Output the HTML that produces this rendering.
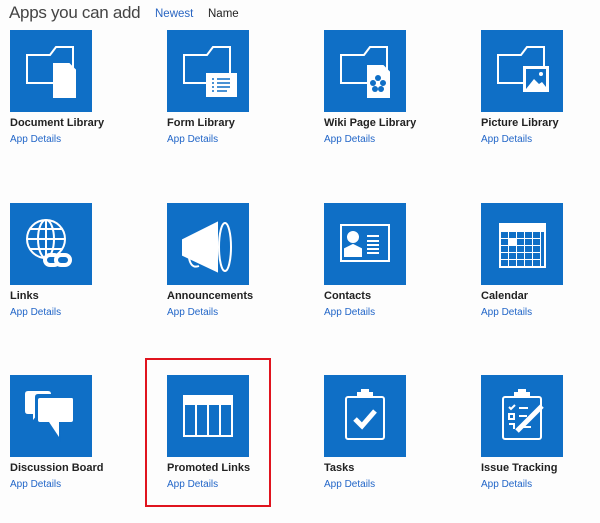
<!DOCTYPE html>
<html><head><meta charset="utf-8"><style>
body{margin:0;width:600px;height:523px;background:#fdfdfd;font-family:"Liberation Sans",sans-serif;position:relative;overflow:hidden}
.h{position:absolute;left:9px;top:3px;font-size:17px;color:#444;letter-spacing:-0.3px}
.n{position:absolute;top:8px;font-size:11.5px}
.t{position:absolute;width:82px;height:82px;background:#0f6fc6}
.t svg{display:block}
.l{position:absolute;font-size:11px;font-weight:bold;color:#222;white-space:nowrap}
.d{position:absolute;font-size:10px;color:#2266c8;white-space:nowrap}
.red{position:absolute;left:145px;top:358px;width:122px;height:145px;border:2px solid #e0141e}
</style></head><body>
<div class="h">Apps you can add</div>
<div class="n" style="left:155px;color:#2a66c2">Newest</div>
<div class="n" style="left:208px;color:#222">Name</div>

<div class="t" style="left:10px;top:30px"><svg width="82" height="82" fill="none" stroke="#fff" stroke-width="2"><path d="M17 53V25H40L46 17H63V53Z"/><path d="M44 34H59L65 40V67H44Z" fill="#fff"/></svg></div>
<div class="l" style="left:10px;top:117px">Document Library</div><div class="d" style="left:10px;top:134px">App Details</div>

<div class="t" style="left:167px;top:30px"><svg width="82" height="82" fill="none" stroke="#fff" stroke-width="2"><path d="M17 53V25H40L46 17H63V53Z"/><rect x="40" y="44" width="29" height="22" fill="#fff"/><path d="M45 49h2M45 53h2M45 57h2M45 61h2M50 49h13M50 53h13M50 57h13M50 61h10" stroke="#0f6fc6" stroke-width="1.5"/></svg></div>
<div class="l" style="left:167px;top:117px">Form Library</div><div class="d" style="left:167px;top:134px">App Details</div>

<div class="t" style="left:324px;top:30px"><svg width="82" height="82" fill="none" stroke="#fff" stroke-width="2"><path d="M17 53V25H40L46 17H63V53Z"/><path d="M44 36H59L65 42V67H44Z" fill="#fff"/><g fill="#0f6fc6" stroke="none"><circle cx="54" cy="48" r="3"/><circle cx="59" cy="53" r="3"/><circle cx="57" cy="59" r="3"/><circle cx="51" cy="59" r="3"/><circle cx="49" cy="53" r="3"/></g></svg></div>
<div class="l" style="left:324px;top:117px">Wiki Page Library</div><div class="d" style="left:324px;top:134px">App Details</div>

<div class="t" style="left:481px;top:30px"><svg width="82" height="82" fill="none" stroke="#fff" stroke-width="2"><path d="M17 53V25H40L46 17H63V53Z"/><rect x="43" y="37" width="24" height="24" fill="#fff"/><rect x="45" y="39" width="20" height="20" fill="#0f6fc6" stroke="none"/><path d="M45 59L53 49L58 54L61 52L65 57V59Z" fill="#fff" stroke="none"/><circle cx="60" cy="44" r="2" fill="#fff" stroke="none"/></svg></div>
<div class="l" style="left:481px;top:117px">Picture Library</div><div class="d" style="left:481px;top:134px">App Details</div>

<div class="t" style="left:10px;top:203px"><svg width="82" height="82" fill="none" stroke="#fff" stroke-width="2"><circle cx="36" cy="36" r="19"/><ellipse cx="36" cy="36" rx="8" ry="19"/><path d="M36 17V55M17 36H55M20 26H52M20 46H52"/><g stroke-width="4"><rect x="35" y="52" width="14" height="10" rx="5" fill="#0f6fc6"/><rect x="46" y="52" width="14" height="10" rx="5" fill="#0f6fc6"/></g></svg></div>
<div class="l" style="left:10px;top:290px">Links</div><div class="d" style="left:10px;top:307px">App Details</div>

<div class="t" style="left:167px;top:203px"><svg width="82" height="82" fill="none" stroke="#fff" stroke-width="2"><path d="M16 37V52L50 68V20Z" fill="#fff"/><ellipse cx="58" cy="44" rx="6" ry="24" fill="#0f6fc6"/><path d="M22 55Q24 66 32 63"/></svg></div>
<div class="l" style="left:167px;top:290px">Announcements</div><div class="d" style="left:167px;top:307px">App Details</div>

<div class="t" style="left:324px;top:203px"><svg width="82" height="82" fill="none" stroke="#fff" stroke-width="2"><rect x="17" y="22" width="48" height="36"/><circle cx="29" cy="34" r="5" fill="#fff"/><path d="M21 53V46L29 42L37 46V53Z" fill="#fff"/><path d="M43 33h12M43 38h12M43 42h12M43 46h12M43 50h12"/></svg></div>
<div class="l" style="left:324px;top:290px">Contacts</div><div class="d" style="left:324px;top:307px">App Details</div>

<div class="t" style="left:481px;top:203px"><svg width="82" height="82"><rect x="18" y="20" width="47" height="45" fill="#fff"/><g fill="#0f6fc6"><rect x="20" y="29" width="7" height="6"/><rect x="28" y="29" width="7" height="6"/><rect x="36" y="29" width="7" height="6"/><rect x="44" y="29" width="7" height="6"/><rect x="52" y="29" width="7" height="6"/><rect x="20" y="36" width="7" height="6"/><rect x="44" y="36" width="7" height="6"/><rect x="36" y="36" width="7" height="6"/><rect x="52" y="36" width="7" height="6"/><rect x="20" y="43" width="7" height="6"/><rect x="28" y="43" width="7" height="6"/><rect x="36" y="43" width="7" height="6"/><rect x="44" y="43" width="7" height="6"/><rect x="52" y="43" width="7" height="6"/><rect x="20" y="50" width="7" height="6"/><rect x="28" y="50" width="7" height="6"/><rect x="36" y="50" width="7" height="6"/><rect x="44" y="50" width="7" height="6"/><rect x="52" y="50" width="7" height="6"/><rect x="20" y="57" width="7" height="6"/><rect x="28" y="57" width="7" height="6"/><rect x="36" y="57" width="7" height="6"/><rect x="44" y="57" width="7" height="6"/><rect x="52" y="57" width="7" height="6"/></g><rect x="28" y="36" width="7" height="6" fill="#fff"/><rect x="60" y="29" width="3" height="34" fill="#0f6fc6"/></svg></div>
<div class="l" style="left:481px;top:290px">Calendar</div><div class="d" style="left:481px;top:307px">App Details</div>

<div class="t" style="left:10px;top:375px"><svg width="82" height="82"><path d="M18 16H38Q41 16 41 19V36Q41 39 38 39H28L23 45V39H18Q15 39 15 36V19Q15 16 18 16Z" fill="#fff"/><path d="M28 19H62Q65 19 65 22V47Q65 50 62 50H51L50 67L38 50H28Q25 50 25 47V22Q25 19 28 19Z" fill="#0f6fc6"/><path d="M30 23H62Q63 23 63 25V45Q63 47 61 47H49L49 62L39 47H30Q28 47 28 45V25Q28 23 30 23Z" fill="#fff"/></svg></div>
<div class="l" style="left:10px;top:462px">Discussion Board</div><div class="d" style="left:10px;top:479px">App Details</div>

<div class="t" style="left:167px;top:375px"><svg width="82" height="82" fill="none" stroke="#fff" stroke-width="2"><rect x="17" y="21" width="48" height="40"/><rect x="17" y="21" width="48" height="8" fill="#fff"/><path d="M29 29V61M41 29V61M53 29V61"/></svg></div>
<div class="l" style="left:167px;top:462px">Promoted Links</div><div class="d" style="left:167px;top:479px">App Details</div>

<div class="t" style="left:324px;top:375px"><svg width="82" height="82" fill="none" stroke="#fff" stroke-width="2"><rect x="22" y="22" width="38" height="42" rx="2"/><path d="M34 22V18H38V15H44V18H48V22Z" fill="#fff"/><path d="M31 44L38 51L51 36" stroke-width="5"/></svg></div>
<div class="l" style="left:324px;top:462px">Tasks</div><div class="d" style="left:324px;top:479px">App Details</div>

<div class="t" style="left:481px;top:375px"><svg width="82" height="82" fill="none" stroke="#fff" stroke-width="2"><rect x="22" y="22" width="38" height="42" rx="2"/><path d="M34 22V18H38V15H44V18H48V22Z" fill="#fff"/><path d="M28 32L30 34L34 30M38 33H47M28 39H33V44H28ZM38 41H46M28 49H33V54M38 52H50"/><path d="M36 56L61 31" stroke-width="5"/></svg></div>
<div class="l" style="left:481px;top:462px">Issue Tracking</div><div class="d" style="left:481px;top:479px">App Details</div>

<div class="red"></div>
</body></html>
